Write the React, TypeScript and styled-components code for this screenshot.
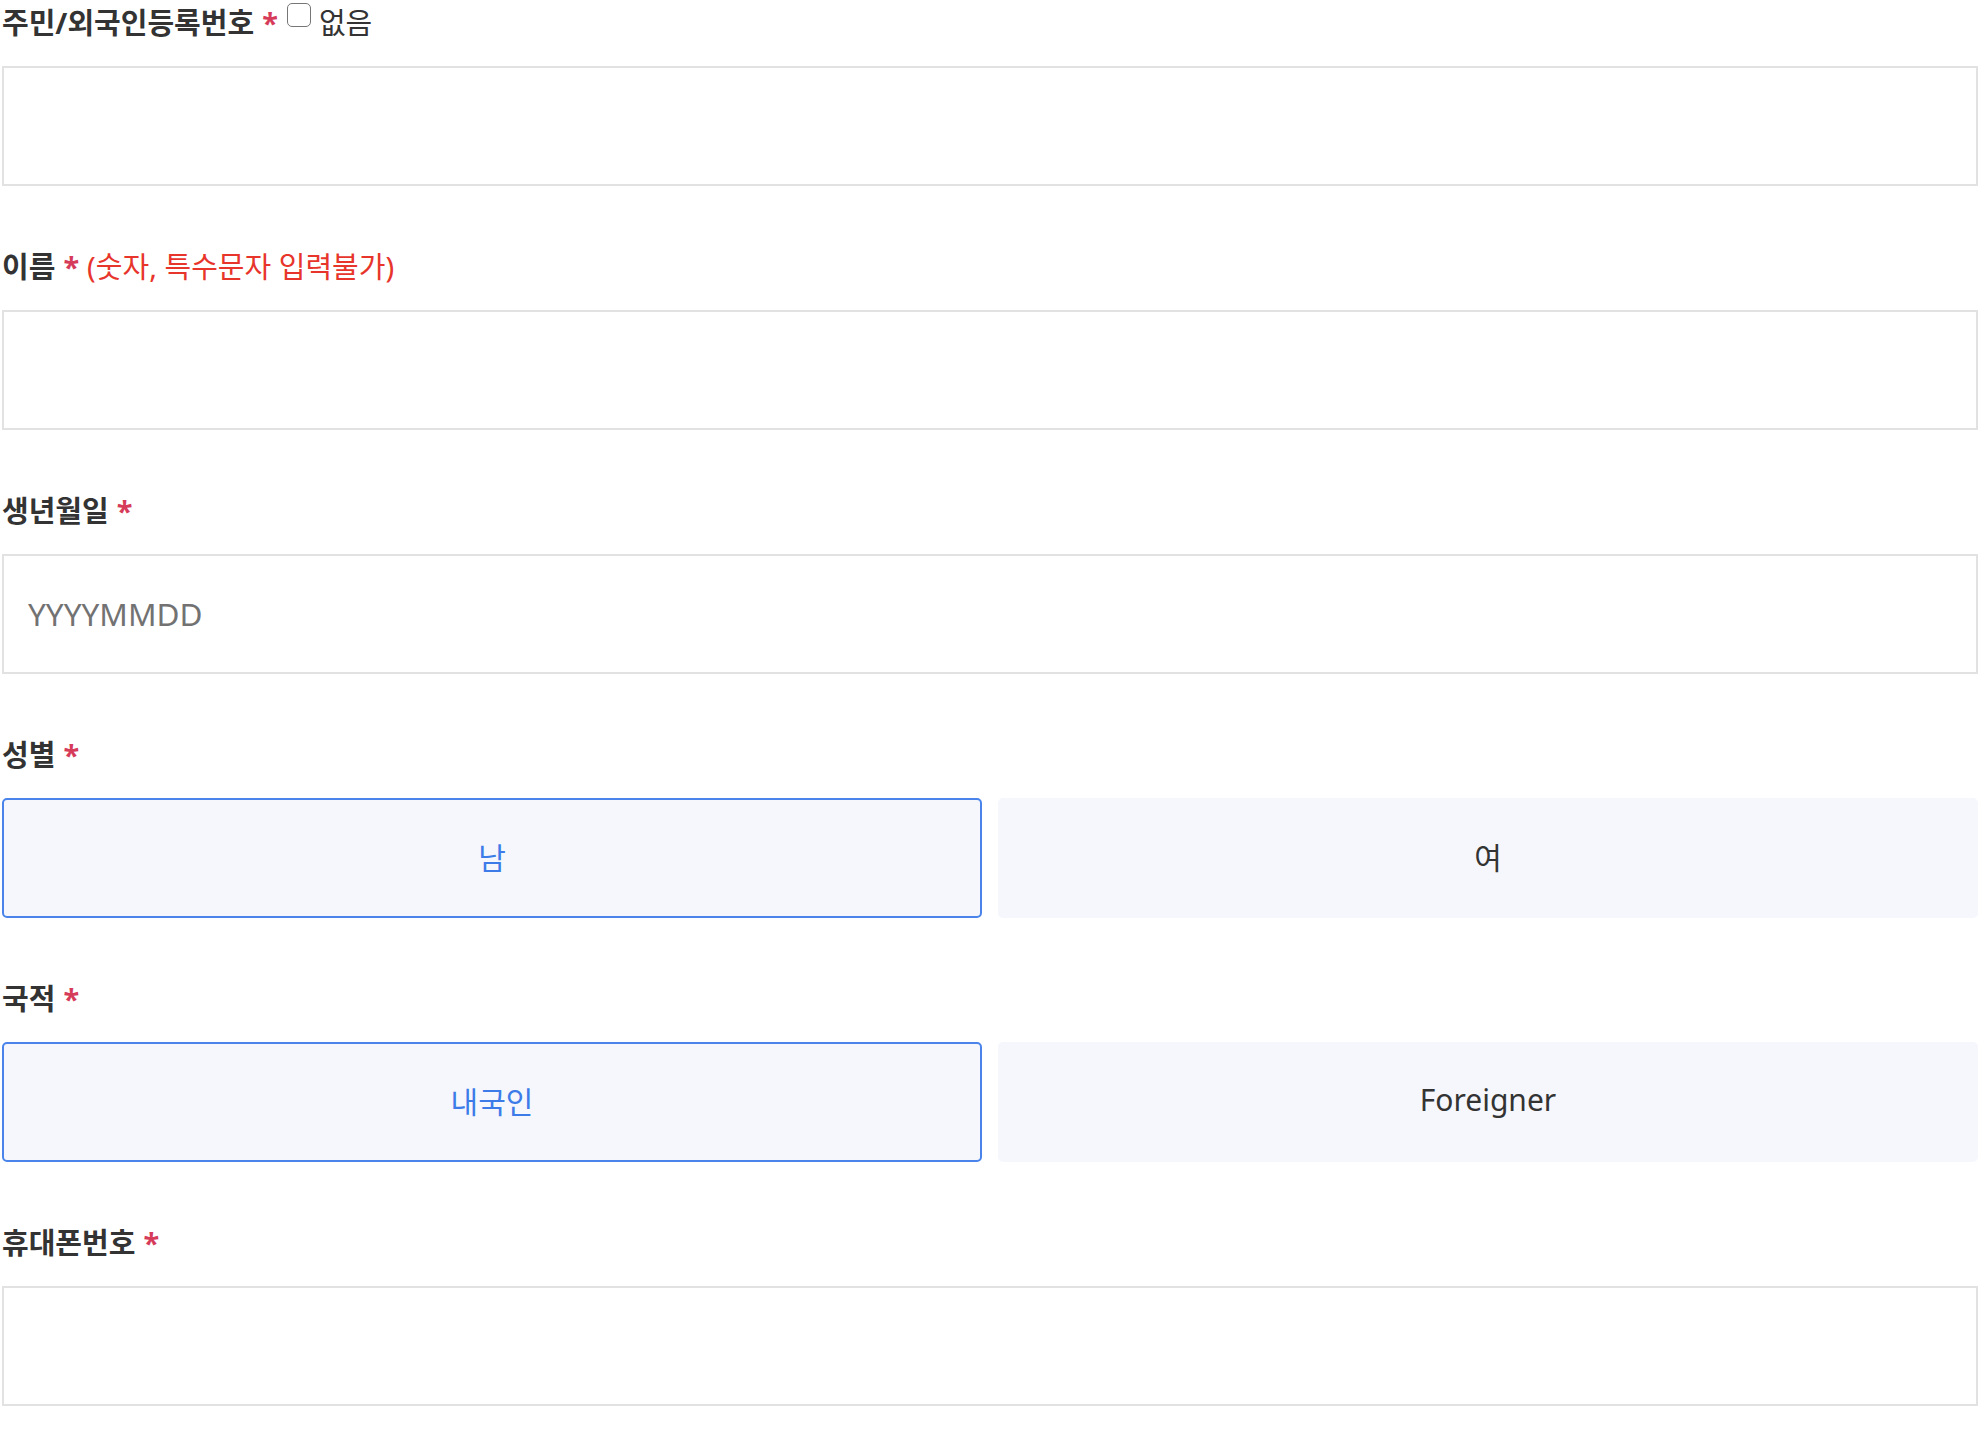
import React, { useState } from 'react';
import styled, { createGlobalStyle } from 'styled-components';

const Global = createGlobalStyle`
  html, body { margin: 0; padding: 0; background: #ffffff; overflow: hidden; }
  body {
    font-family: "Noto Sans", "Noto Sans CJK KR", sans-serif;
    color: #333333;
  }
  * { box-sizing: border-box; }
`;

const Form = styled.form`
  width: 1976px;
  margin-left: 2px;
  display: flex;
  flex-direction: column;
  gap: 58px;
`;

const Field = styled.div`
  display: flex;
  flex-direction: column;
`;

const Label = styled.label`
  display: block;
  height: 44px;
  margin-bottom: 22px;
  font-size: 29px;
  line-height: 46px;
  font-weight: 700;
  color: #333333;
  white-space: nowrap;
`;

const Star = styled.span`
  color: #d63c5a;
  font-weight: 700;
  margin-left: 8px;
`;

const Note = styled.span`
  color: #e8352b;
  font-weight: 400;
  margin-left: 8px;
`;

const Check = styled.input`
  appearance: none;
  -webkit-appearance: none;
  width: 24px;
  height: 24px;
  margin: 3px 8px 0 9px;
  vertical-align: top;
  border: 1.5px solid #767676;
  border-radius: 5px;
  background: #ffffff;
`;

const CheckText = styled.span`
  font-weight: 400;
  color: #333333;
`;

const TextInput = styled.input`
  display: block;
  width: 100%;
  height: 120px;
  border: 2px solid #e2e2e2;
  border-radius: 0;
  padding: 0 24px 2px;
  font-family: "Noto Sans", "Noto Sans CJK KR", sans-serif;
  font-size: 31.5px;
  color: #333333;
  background: #ffffff;
  outline: none;
  &::placeholder { color: #727272; }
`;

const Choices = styled.div`
  display: grid;
  grid-template-columns: 1fr 1fr;
  gap: 16px;
`;

const Choice = styled.button<{ $active: boolean }>`
  height: 120px;
  border-radius: 5px;
  border: 2px solid ${p => (p.$active ? '#4a84ea' : '#f5f7fc')};
  background: #f5f7fc;
  color: ${p => (p.$active ? '#3d7ce8' : '#333333')};
  font-family: "Noto Sans", "Noto Sans CJK KR", sans-serif;
  font-size: 30px;
  font-weight: 400;
  cursor: pointer;
  padding: 0 0 5px;
`;

export default function App() {
  const [gender, setGender] = useState('m');
  const [nation, setNation] = useState('kr');
  return (
    <>
      <Global />
      <Form onSubmit={e => e.preventDefault()}>
        <Field>
          <Label>
            주민/외국인등록번호<Star>*</Star>
            <Check type="checkbox" />
            <CheckText>없음</CheckText>
          </Label>
          <TextInput type="text" />
        </Field>
        <Field>
          <Label>
            이름<Star>*</Star>
            <Note>(숫자, 특수문자 입력불가)</Note>
          </Label>
          <TextInput type="text" />
        </Field>
        <Field>
          <Label>
            생년월일<Star>*</Star>
          </Label>
          <TextInput type="text" placeholder="YYYYMMDD" />
        </Field>
        <Field>
          <Label>
            성별<Star>*</Star>
          </Label>
          <Choices>
            <Choice type="button" $active={gender === 'm'} onClick={() => setGender('m')}>남</Choice>
            <Choice type="button" $active={gender === 'f'} onClick={() => setGender('f')}>여</Choice>
          </Choices>
        </Field>
        <Field>
          <Label>
            국적<Star>*</Star>
          </Label>
          <Choices>
            <Choice type="button" $active={nation === 'kr'} onClick={() => setNation('kr')}>내국인</Choice>
            <Choice type="button" $active={nation === 'fr'} onClick={() => setNation('fr')}>Foreigner</Choice>
          </Choices>
        </Field>
        <Field>
          <Label>
            휴대폰번호<Star>*</Star>
          </Label>
          <TextInput type="tel" />
        </Field>
      </Form>
    </>
  );
}
